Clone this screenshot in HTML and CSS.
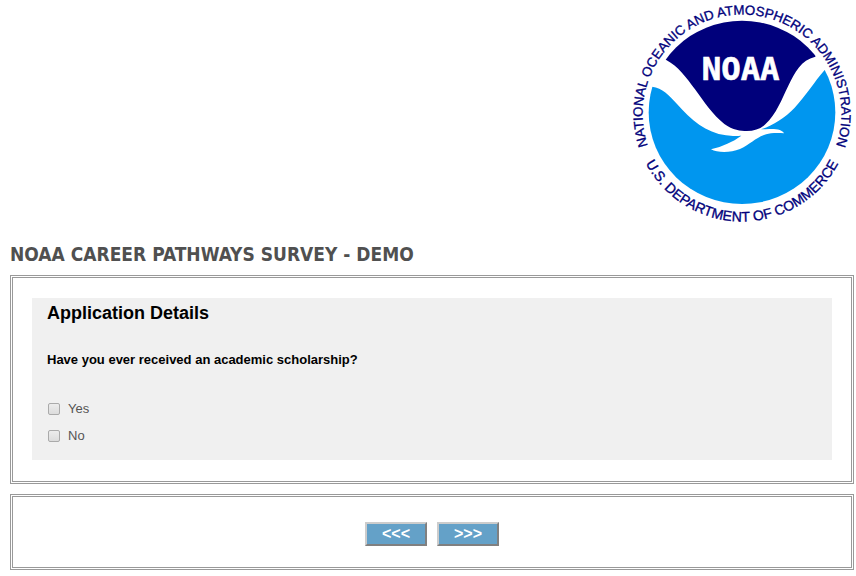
FILE: index.html
```html
<!DOCTYPE html>
<html lang="en">
<head>
<meta charset="utf-8">
<title>NOAA Career Pathways Survey - Demo</title>
<link rel="stylesheet" href="styles.css">
</head>
<body>
<header class="banner">
  <svg class="logo" viewBox="0 0 690 690" role="img" aria-label="NOAA logo">
    <defs>
      <path id="arc-top" d="M74 459A298 298 0 1 1 622 459"/>
      <path id="arc-bottom" d="M50 471A326 326 0 0 0 646 471"/>
      <clipPath id="disc"><ellipse cx="348" cy="337" rx="280" ry="275"/></clipPath>
    </defs>
    <g clip-path="url(#disc)">
      <rect class="white" width="690" height="690"/>
      <path class="navy" d="M90 160L122 181C155 198 181 233 207 268C235 306 260 345 295 372C320 391 345 393 362 393C386 393 404 386 418 373C452 340 466 300 487 257C507 216 525 180 568 170L600 100V0H90Z"/>
      <path class="sky" d="M40 240L78 260C110 264 128 285 153 312C195 360 240 398 300 406C320 409 337 408 346 407C320 426 290 439 255 448C275 459 313 459 342 447C380 430 393 406 435 400C450 398 463 399 474 400C470 390 453 386 430 387C421 387 413 388 405 388C440 376 475 355 506 323C540 287 565 245 596 210L660 190V690H0V240Z"/>
    </g>
    <text class="wordmark" x="344" y="241">NOAA</text>
    <text class="ring ring-top"><textPath href="#arc-top" startOffset="50%">NATIONAL OCEANIC AND ATMOSPHERIC ADMINISTRATION</textPath></text>
    <text class="ring ring-bottom"><textPath href="#arc-bottom" startOffset="50%">U.S. DEPARTMENT OF COMMERCE</textPath></text>
  </svg>
</header>
<main>
  <h1>NOAA CAREER PATHWAYS SURVEY - DEMO</h1>
  <form>
    <section class="frame questions">
      <div class="panel">
        <h2>Application Details</h2>
        <fieldset>
          <legend>Have you ever received an academic scholarship?</legend>
          <label class="choice"><input type="checkbox" name="scholarship" value="yes">Yes</label>
          <label class="choice"><input type="checkbox" name="scholarship" value="no">No</label>
        </fieldset>
      </div>
    </section>
    <div class="frame actions">
      <button type="button">&lt;&lt;&lt;</button>
      <button type="button">&gt;&gt;&gt;</button>
    </div>
  </form>
</main>
</body>
</html>
```
FILE: styles.css
```css
* {
  box-sizing: border-box;
}

body {
  margin: 0;
  padding: 0 2px 6px 10px;
  background: #fff;
  color: #555;
  font-family: "Liberation Sans", Arial, sans-serif;
  font-size: 13px;
  line-height: 16px;
}

.banner {
  display: flex;
  justify-content: flex-end;
  margin-right: -2px;
}

.logo {
  display: block;
  width: 230px;
  height: 230px;
}

.white { fill: #fff; }
.navy { fill: #00007b; }
.sky { fill: #0096ef; }

.wordmark {
  fill: #fff;
  stroke: #fff;
  stroke-width: 2px;
  font-family: "DejaVu Sans Mono", monospace;
  font-size: 97px;
  font-weight: 700;
  text-anchor: middle;
}

.ring {
  fill: #00007b;
  stroke: #00007b;
  stroke-width: 1px;
  font-family: "Liberation Sans", Arial, sans-serif;
  text-anchor: middle;
}

.ring-top { font-size: 40px; }
.ring-bottom { font-size: 42px; }

h1 {
  margin: 12px 0 9px;
  color: #505050;
  font-family: "DejaVu Sans Condensed", "DejaVu Sans", sans-serif;
  font-size: 19px;
  font-weight: 700;
  line-height: 24px;
}

.frame {
  border: 3px double #999;
}

.questions {
  padding: 20px 19px 21px;
}

.panel {
  padding: 4px 15px 16px;
  background: #f0f0f0;
}

h2 {
  margin: 0 0 26px;
  color: #000;
  font-size: 18px;
  line-height: 22px;
}

fieldset {
  display: flex;
  flex-direction: column;
  margin: 0;
  padding: 0;
  border: 0;
}

legend {
  margin-bottom: 31px;
  padding: 0;
  color: #000;
  font-weight: 700;
  line-height: 20px;
}

.choice {
  display: flex;
  align-items: center;
  gap: 8px;
}

.choice + .choice {
  margin-top: 11px;
}

.choice input {
  appearance: none;
  width: 12px;
  height: 12px;
  margin: 0 0 0 1px;
  border: 1px solid #aaa;
  border-radius: 2px;
  background: linear-gradient(#ececec, #dcdcdc);
}

.choice input:checked {
  background: #64a1c8;
}

.actions {
  display: flex;
  justify-content: center;
  gap: 10px;
  margin-top: 10px;
  padding: 25px 0 21px;
}

button {
  width: 62px;
  height: 24px;
  padding: 0;
  border: 2px solid;
  border-color: #ccc #808080 #808080 #ccc;
  background: #64a1c8;
  color: #fff;
  font-family: "Liberation Sans", Arial, sans-serif;
  font-size: 16px;
  font-weight: 700;
  line-height: 20px;
}
```
